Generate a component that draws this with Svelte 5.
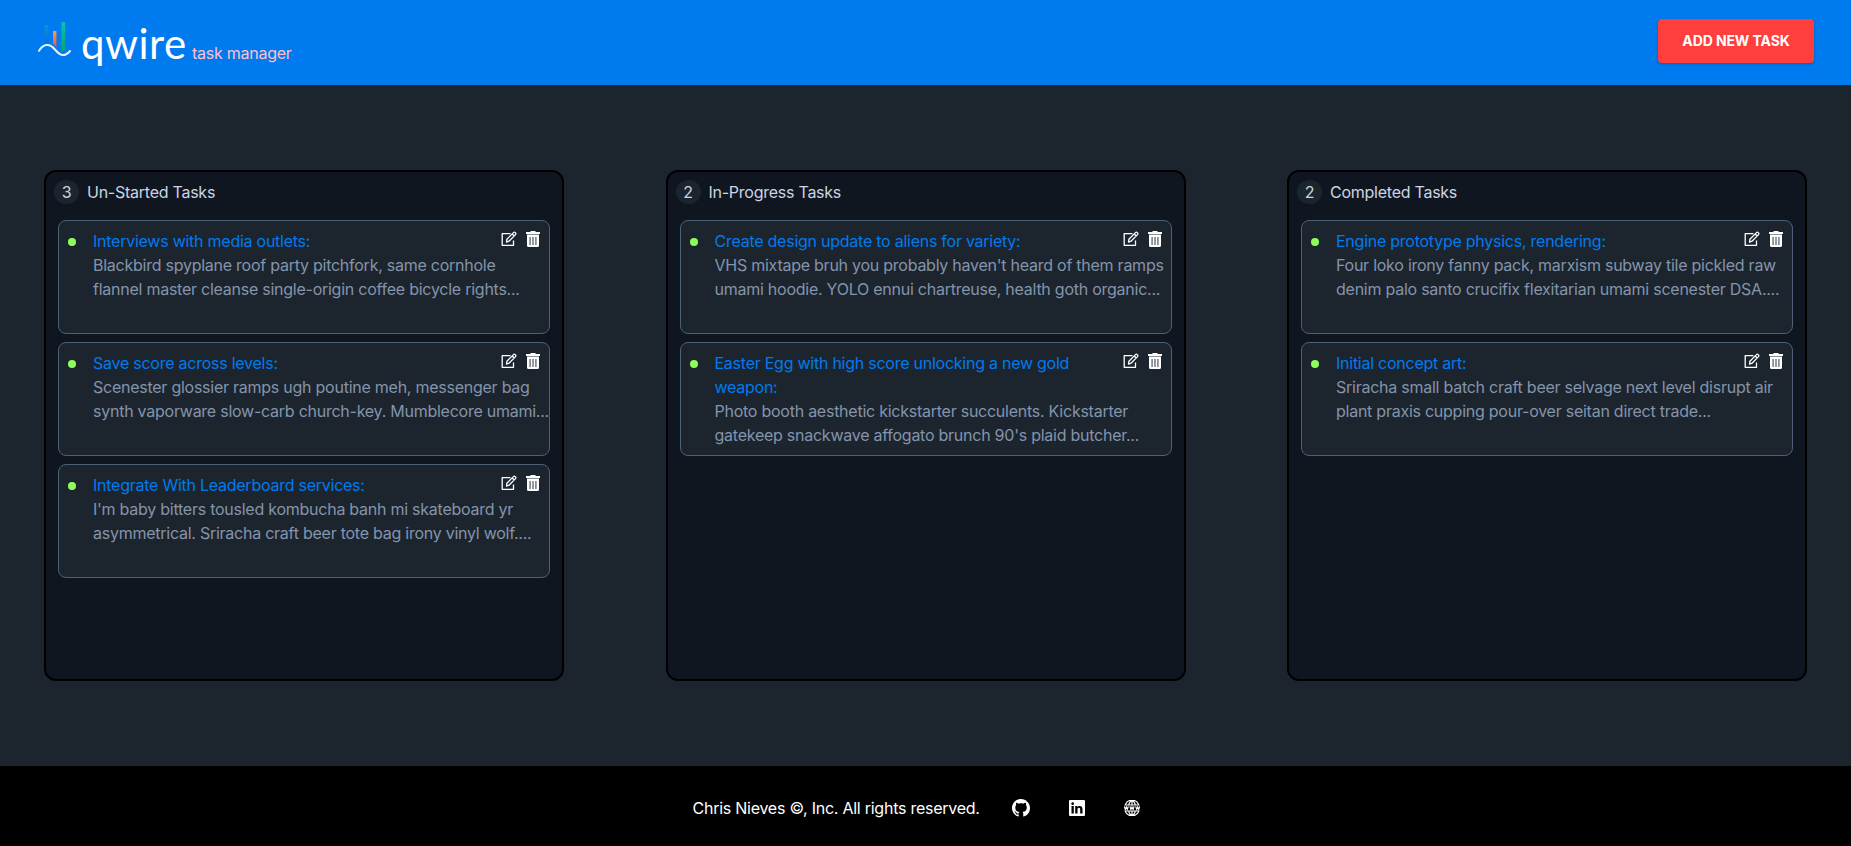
<script>
  const columns = [
    {
      name: 'Un-Started Tasks',
      tasks: [
        { title: ['Interviews with media outlets:'], body: ['Blackbird spyplane roof party pitchfork, same cornhole', 'flannel master cleanse single-origin coffee bicycle rights...'] },
        { title: ['Save score across levels:'], body: ['Scenester glossier ramps ugh poutine meh, messenger bag', 'synth vaporware slow-carb church-key. Mumblecore umami...'] },
        { title: ['Integrate With Leaderboard services:'], body: ["I'm baby bitters tousled kombucha banh mi skateboard yr", 'asymmetrical. Sriracha craft beer tote bag irony vinyl wolf....'] }
      ]
    },
    {
      name: 'In-Progress Tasks',
      tasks: [
        { title: ['Create design update to aliens for variety:'], body: ["VHS mixtape bruh you probably haven't heard of them ramps", 'umami hoodie. YOLO ennui chartreuse, health goth organic...'] },
        { title: ['Easter Egg with high score unlocking a new gold', 'weapon:'], body: ['Photo booth aesthetic kickstarter succulents. Kickstarter', "gatekeep snackwave affogato brunch 90's plaid butcher..."] }
      ]
    },
    {
      name: 'Completed Tasks',
      tasks: [
        { title: ['Engine prototype physics, rendering:'], body: ['Four loko irony fanny pack, marxism subway tile pickled raw', 'denim palo santo crucifix flexitarian umami scenester DSA....'] },
        { title: ['Initial concept art:'], body: ['Sriracha small batch craft beer selvage next level disrupt air', 'plant praxis cupping pour-over seitan direct trade...'] }
      ]
    }
  ];
</script>

<div class="app">
  <header>
    <div class="brand">
      <svg class="mark" width="34" height="38" viewBox="0 0 34 38">
        <defs>
          <linearGradient id="blue" x1="0" y1="0" x2="0" y2="1"><stop offset="0" stop-color="#0a94d8" /><stop offset="1" stop-color="#0a6fe0" /></linearGradient>
          <linearGradient id="orange" x1="0" y1="0" x2="0" y2="1"><stop offset="0" stop-color="#f79a52" /><stop offset="1" stop-color="#f0553f" /></linearGradient>
          <linearGradient id="green" x1="0" y1="0" x2="0" y2="1"><stop offset="0" stop-color="#06c3b4" /><stop offset="1" stop-color="#0aa36a" /></linearGradient>
        </defs>
        <rect x="6.3" y="5" width="3.8" height="17" fill="url(#blue)" />
        <path d="M15 11h3.4v16l-3.4-3.6z" fill="url(#orange)" />
        <path d="M23.4 2h3.8v28l-3.8 2z" fill="url(#green)" />
        <path d="M1 30.8C5 24.500 11 22.500 16 28.500S25.500 38.500 32 31" fill="none" stroke="#e6f1ff" stroke-width="2" stroke-linecap="round" />
      </svg>
      <span class="word">qwire</span>
      <span class="sub">task manager</span>
    </div>
    <button>ADD NEW TASK</button>
  </header>

  <main>
    {#each columns as column}
      <section>
        <h2><span class="count">{column.tasks.length}</span><span>{column.name}</span></h2>
        <ul>
          {#each column.tasks as task}
            <li>
              <i class="dot"></i>
              <div class="copy">
                <h3>{#each task.title as line}<span>{line}</span>{/each}</h3>
                <p>{#each task.body as line}<span>{line}</span>{/each}</p>
              </div>
              <div class="actions">
                <svg width="16" height="16" viewBox="0 0 16 16" fill="none" stroke="#fff" stroke-width="1.3" stroke-linejoin="round">
                  <path d="M9.500 2.700H1.200v11.600h11.300V9.400" />
                  <path d="M5.500 11.100l.4-2.900 6.600-6.600c.5-.5 1.200-.5 1.700 0l.3.3c.5.500.5 1.200 0 1.700L8 10.200zM11.200 3l2 2" />
                </svg>
                <svg width="14" height="16" viewBox="0 0 14 16">
                  <path d="M4.500 0h5v1H14v2H0V1h4.500zM1 3.600h12V14.500a1.500 1.500 0 0 1-1.500 1.500h-9A1.500 1.500 0 0 1 1 14.500z" fill="#fff" />
                  <path d="M3.300 6h1.600v8H3.300zM6.200 6h1.600v8H6.200zM9.100 6h1.600v8H9.100z" fill="#7b838b" />
                </svg>
              </div>
            </li>
          {/each}
        </ul>
      </section>
    {/each}
  </main>

  <footer>
    <span class="legal">Chris Nieves ©, Inc. All rights reserved.</span>
    <svg width="18" height="18" viewBox="0 0 16 16" fill="#fff">
      <path d="M8 0C3.580 0 0 3.580 0 8c0 3.540 2.290 6.530 5.470 7.590.4.070.55-.17.55-.38 0-.19-.01-.82-.01-1.490-2.010.370-2.530-.490-2.690-.940-.09-.23-.48-.94-.82-1.130-.28-.15-.68-.52-.01-.53.63-.01 1.080.58 1.230.820.72 1.210 1.870.870 2.330.660.07-.52.28-.87.51-1.070-1.780-.2-3.640-.89-3.640-3.950 0-.87.31-1.590.82-2.150-.08-.2-.36-1.020.08-2.120 0 0 .67-.21 2.200.820.64-.18 1.320-.27 2-.27s1.360.09 2 .27c1.530-1.040 2.200-.82 2.200-.82.44 1.100.16 1.920.08 2.120.51.56.82 1.270.82 2.150 0 3.070-1.870 3.750-3.650 3.950.29.25.54.73.54 1.480 0 1.070-.01 1.930-.01 2.200 0 .21.15.46.55.38A8.010 8.010 0 0 0 16 8c0-4.420-3.580-8-8-8z" />
    </svg>
    <svg width="16" height="16" viewBox="0 0 16 16">
      <rect width="16" height="16" rx="1" fill="#fff" />
      <path d="M2.500 6.100h2.300v7.400H2.500zM6.200 6.100h2.200v1c.4-.7 1.200-1.200 2.200-1.200 2.300 0 2.900 1.500 2.900 3.500v4.100h-2.300V9.800c0-.9 0-2-1.200-2s-1.500.9-1.500 1.900v3.800H6.200z" fill="#000" />
      <circle cx="3.650" cy="3.700" r="1.350" fill="#000" />
    </svg>
    <svg width="16" height="16" viewBox="0 0 16 16" fill="none" stroke="#fff" stroke-width="1.200">
      <path d="M1.200 5a7.200 7.200 0 0 1 13.600 0zM1.200 11a7.200 7.200 0 0 0 13.600 0zM8 .6v4.400M8 11v4.400M4.700 5C5.200 2.800 6.500.8 8 .8S10.800 2.800 11.300 5M4.700 11c.5 2.200 1.800 4.200 3.300 4.200s2.800-2 3.300-4.200" />
      <path d="M.3 6.400l1 3 1-2.400 1 2.400 1-3M5.900 6.400l1 3 1.100-2.400 1.100 2.400 1-3M11.700 6.400l1 3 1-2.400 1 2.400 1-3" />
    </svg>
  </footer>
</div>

<style>
  :global(body) { margin: 0; background: #1c252e; }
  .app {
    height: 846px;
    display: grid;
    grid-template-rows: 85px 681px 80px;
    background: #1c252e;
    font: 16px/24px Inter, "Liberation Sans", sans-serif;
    letter-spacing: -0.25px;
    white-space: nowrap;
    overflow: hidden;
  }
  header {
    display: flex;
    align-items: center;
    justify-content: space-between;
    padding: 0 37px 0 38px;
    background: #007aef;
  }
  .brand { display: flex; align-items: baseline; height: 48px; }
  .mark { align-self: flex-start; margin-top: 1px; }
  .word {
    font: 42px/48px Lato, sans-serif;
    letter-spacing: 0.5px;
    color: #fff;
    margin-left: 9px;
    width: 111px;
  }
  .sub { color: #ffc0cb; }
  button {
    width: 156px;
    height: 44px;
    padding: 0;
    margin-bottom: 3px;
    border: 0;
    border-radius: 4px;
    background: #ff3e3e;
    color: #fff;
    font: 700 14px/20px Inter, sans-serif;
    letter-spacing: -0.1px;
    box-shadow: 0 1px 3px rgba(0, 0, 0, 0.25);
  }
  main {
    display: flex;
    align-items: center;
    justify-content: space-between;
    padding: 0 44px;
  }
  section {
    box-sizing: border-box;
    width: 520px;
    height: 511px;
    padding: 8px 12px;
    border: 2px solid #000;
    border-radius: 12px;
    background: #101620;
  }
  h2 {
    display: flex;
    align-items: center;
    gap: 8px;
    margin: 0 0 16px -4px;
    font-size: inherit;
    font-weight: 400;
    color: #cbd5e1;
  }
  .count {
    width: 25px;
    height: 24px;
    border-radius: 50%;
    background: #1c252e;
    text-align: center;
  }
  ul { display: grid; gap: 8px; margin: 0; padding: 0; list-style: none; }
  li {
    box-sizing: border-box;
    display: flex;
    height: 114px;
    padding: 8px 9px;
    border: 1px solid #4c6178;
    border-radius: 8px;
    background: #1c252e;
  }
  .dot {
    flex: none;
    width: 8px;
    height: 8px;
    margin: 9px 17px 0 0;
    border-radius: 50%;
    background: #8cff5a;
  }
  .copy { flex: 1; width: 0; }
  h3, p { margin: 0; font-size: inherit; font-weight: 400; }
  h3 span, p span { display: block; }
  h3 { color: #007aef; }
  p { color: #8494ab; }
  .actions { flex: none; display: flex; gap: 9px; margin: 2px 0 0; height: 16px; width: 39px; }
  footer {
    display: flex;
    align-items: center;
    justify-content: center;
    background: #000;
    color: #fff;
  }
  .legal { width: 282px; margin: 4px 37px 0 0; }
  footer svg { margin-top: 4px; margin-right: 39px; }
  footer svg:last-child { margin-right: 19px; }
</style>
